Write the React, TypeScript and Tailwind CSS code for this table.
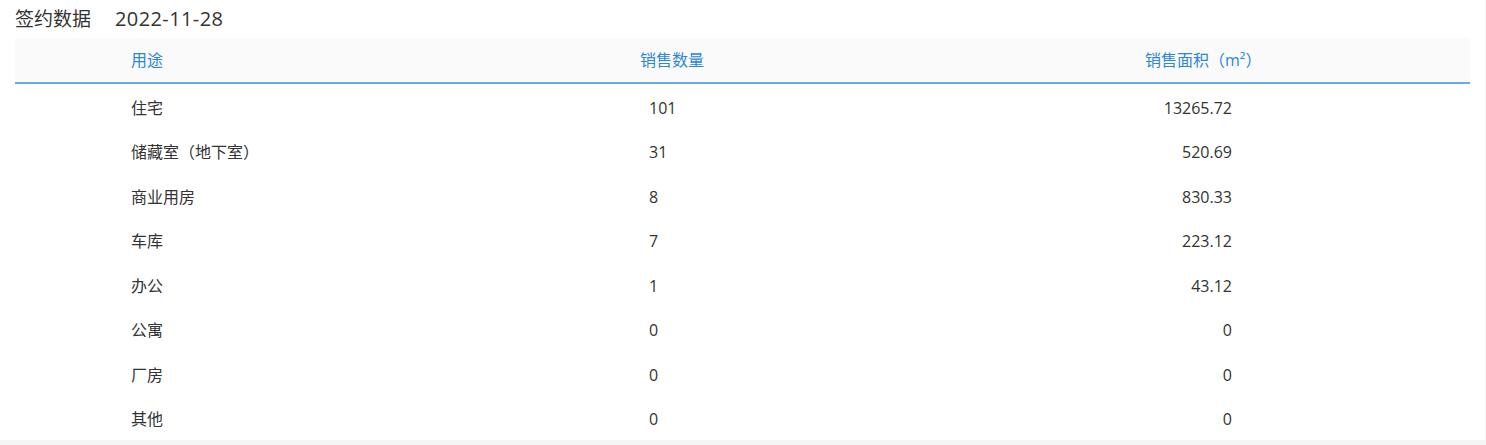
import * as React from "react";

type Row = { use: string; count: string; area: string };

const rows: Row[] = [
  { use: "住宅", count: "101", area: "13265.72" },
  { use: "储藏室（地下室）", count: "31", area: "520.69" },
  { use: "商业用房", count: "8", area: "830.33" },
  { use: "车库", count: "7", area: "223.12" },
  { use: "办公", count: "1", area: "43.12" },
  { use: "公寓", count: "0", area: "0" },
  { use: "厂房", count: "0", area: "0" },
  { use: "其他", count: "0", area: "0" },
];

const font = {
  fontFamily: '"Open Sans", "Noto Sans CJK SC", sans-serif',
};

export default function App() {
  return (
    <div className="min-h-[445px] bg-[#f5f5f5]" style={font}>
      <div className="w-[1485px] h-[440px] bg-white">
        {/* 标题 */}
        <div className="h-[38px] flex items-center pl-[15px] text-[19px] text-[#333]">
          <span>签约数据</span>
          <span className="ml-[24px] text-[20px] tracking-[0.4px]">2022-11-28</span>
        </div>

        <div className="mx-[15px] w-[1455px]">
          {/* 表头 */}
          <div className="flex h-[46px] items-center bg-[#fafafa] border-b-2 border-[#6aa9e2] text-[16px] text-[#2d86d7]">
            <div className="w-[610px] pl-[116px]">用途</div>
            <div className="w-[500px] pl-[15px]">销售数量</div>
            <div className="flex-1 pl-[20px]">销售面积（m²）</div>
          </div>

          {/* 数据行 */}
          {rows.map((r) => (
            <div
              key={r.use}
              className="flex h-[44.5px] items-center pt-[3px] text-[16px] text-[#333]"
            >
              <div className="w-[610px] pl-[116px]">{r.use}</div>
              <div className="w-[500px] pl-[24px]">{r.count}</div>
              <div className="flex-1 text-right pr-[238px]">{r.area}</div>
            </div>
          ))}
        </div>
      </div>
    </div>
  );
}
